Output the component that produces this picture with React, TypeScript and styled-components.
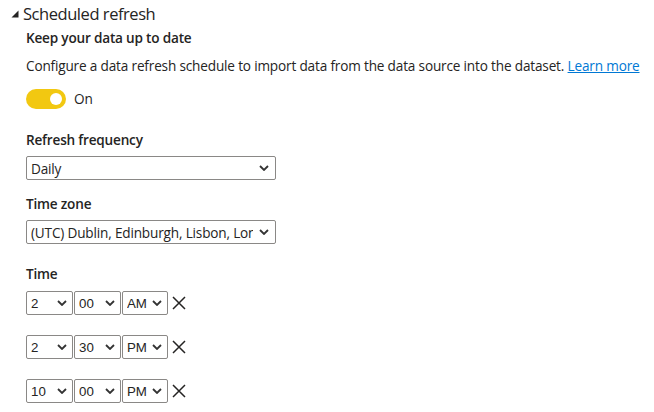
import React from 'react'
import { createGlobalStyle, styled } from 'styled-components'

const chevron =
  "data:image/svg+xml;utf8,<svg xmlns='http://www.w3.org/2000/svg' width='10' height='6' viewBox='0 0 10 6'><path d='M1 1l4 4 4-4' fill='none' stroke='%23333' stroke-width='1.8'/></svg>"

const GlobalStyle = createGlobalStyle`
  body {
    margin: 0;
    background: #ffffff;
    font-family: 'Open Sans', 'Noto Sans', sans-serif;
    color: #252423;
  }
`

const hours = ['2', '2', '10']
const minutes = ['00', '30', '00']
const periods = ['AM', 'PM', 'PM']

const App = () => {
  return (
    <>
      <GlobalStyle />
      <StyledPanel>
        <StyledHeader>
          <svg width="8" height="8" viewBox="0 0 8 8">
            <polygon points="7.5,0.5 7.5,7.5 0.5,7.5" fill="#252423" />
          </svg>
          <StyledTitle>Scheduled refresh</StyledTitle>
        </StyledHeader>
        <StyledBody>
          <StyledLabel>Keep your data up to date</StyledLabel>
          <StyledText>
            Configure a data refresh schedule to import data from the data source into the dataset.{' '}
            <StyledLink href="#">Learn more</StyledLink>
          </StyledText>
          <StyledToggleRow>
            <StyledToggle>
              <StyledKnob />
            </StyledToggle>
            <span>On</span>
          </StyledToggleRow>

          <StyledField>
            <StyledLabel>Refresh frequency</StyledLabel>
            <StyledSelect defaultValue="Daily">
              <option>Daily</option>
              <option>Weekly</option>
            </StyledSelect>
          </StyledField>

          <StyledField>
            <StyledLabel>Time zone</StyledLabel>
            <StyledSelect defaultValue="utc">
              <option value="utc">(UTC) Dublin, Edinburgh, Lisbon, London</option>
            </StyledSelect>
          </StyledField>

          <StyledTimeField>
            <StyledLabel>Time</StyledLabel>
            <StyledTimeList>
              {hours.map((h, i) => (
                <StyledTimeRow key={i}>
                  <StyledTimeSelect $width={47} defaultValue={h}>
                    <option>{h}</option>
                  </StyledTimeSelect>
                  <StyledTimeSelect $width={47} defaultValue={minutes[i]}>
                    <option>{minutes[i]}</option>
                  </StyledTimeSelect>
                  <StyledTimeSelect $width={46} defaultValue={periods[i]}>
                    <option>{periods[i]}</option>
                  </StyledTimeSelect>
                  <StyledRemove aria-label="Remove">
                    <svg width="14" height="14" viewBox="0 0 14 14">
                      <path d="M1 1L13 13M13 1L1 13" stroke="#252423" strokeWidth="1.5" />
                    </svg>
                  </StyledRemove>
                </StyledTimeRow>
              ))}
            </StyledTimeList>
          </StyledTimeField>
        </StyledBody>
      </StyledPanel>
    </>
  )
}

export default App

const StyledPanel = styled.div`
  width: 654px;
  height: 412px;
  padding: 2px 0 0 11px;
  box-sizing: border-box;
  overflow: hidden;
`

const StyledHeader = styled.div`
  display: flex;
  align-items: center;
  gap: 4px;
  height: 24px;
`

const StyledTitle = styled.div`
  font-size: 16.5px;
  letter-spacing: -0.45px;
  line-height: 24px;
  color: #252423;
`

const StyledBody = styled.div`
  padding-left: 15px;
  margin-top: 2px;
`

const StyledLabel = styled.div`
  font-size: 13.6px;
  letter-spacing: -0.2px;
  line-height: 20px;
  font-weight: 600;
`

const StyledText = styled.div`
  margin-top: 8px;
  font-size: 13.6px;
  letter-spacing: -0.17px;
  line-height: 20px;
  white-space: nowrap;
`

const StyledLink = styled.a`
  color: #0078d4;
  text-decoration: underline;
`

const StyledToggleRow = styled.div`
  display: flex;
  align-items: center;
  gap: 8px;
  margin-top: 13px;
  font-size: 13.6px;
  line-height: 20px;
`

const StyledToggle = styled.div`
  width: 40px;
  height: 20px;
  border-radius: 10px;
  background: #f2c811;
  display: flex;
  align-items: center;
  justify-content: flex-end;
  padding-right: 4px;
  box-sizing: border-box;
`

const StyledKnob = styled.div`
  width: 12px;
  height: 12px;
  border-radius: 50%;
  background: #ffffff;
`

const StyledField = styled.div`
  display: flex;
  flex-direction: column;
  gap: 6px;
  margin-top: 21px;

  & + & {
    margin-top: 14px;
  }
`

const StyledSelect = styled.select`
  width: 250px;
  height: 24px;
  box-sizing: border-box;
  appearance: none;
  border: 1px solid #8a8886;
  border-radius: 2px;
  padding: 0 22px 0 4px;
  font-family: 'Open Sans', 'Noto Sans', sans-serif;
  font-size: 13.6px;
  letter-spacing: -0.17px;
  color: #252423;
  background: #ffffff url("${chevron}") no-repeat right 6px center;
  text-overflow: clip;
`

const StyledTimeField = styled.div`
  margin-top: 20px;
`

const StyledTimeList = styled.div`
  display: flex;
  flex-direction: column;
  gap: 20px;
  margin-top: 7px;
`

const StyledTimeRow = styled.div`
  display: flex;
  align-items: center;
  gap: 1px;
`

const StyledTimeSelect = styled.select<{ $width: number }>`
  width: ${(p) => p.$width}px;
  height: 24px;
  box-sizing: border-box;
  appearance: none;
  border: 1px solid #8a8886;
  border-radius: 2px;
  padding: 0 18px 0 4px;
  font-family: 'Liberation Sans', Arial, sans-serif;
  font-size: 13.3px;
  color: #252423;
  background: #ffffff url("${chevron}") no-repeat right 5px center;
`

const StyledRemove = styled.button`
  display: flex;
  align-items: center;
  justify-content: center;
  width: 16px;
  height: 24px;
  margin-left: 2px;
  padding: 0;
  border: none;
  background: none;
  cursor: pointer;
`
